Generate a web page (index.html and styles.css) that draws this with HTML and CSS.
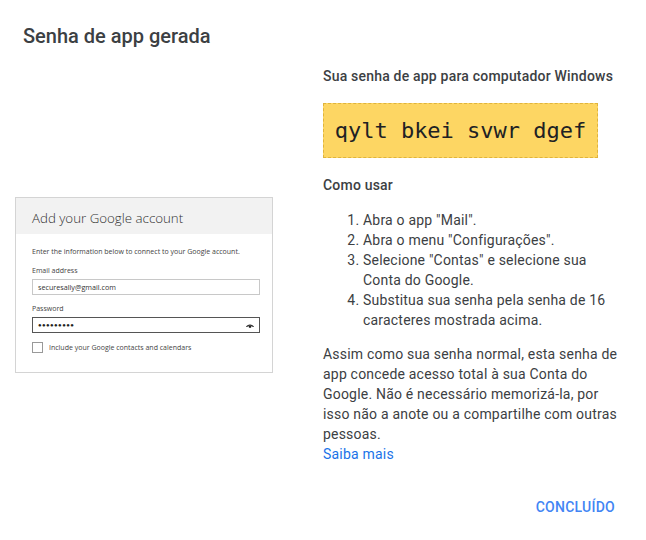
FILE: index.html
```html
<!DOCTYPE html>
<html lang="pt-BR">
<head>
<meta charset="utf-8">
<title>Senha de app gerada</title>
<link rel="stylesheet" href="styles.css">
</head>
<body>
<div class="dialog">
  <h1 class="title">Senha de app gerada</h1>
  <div class="content">
    <div class="left">
      <div class="card">
        <div class="card-head">Add your Google account</div>
        <div class="card-body">
          <p class="card-intro">Enter the information below to connect to your Google account.</p>
          <div class="field-label">Email address</div>
          <div class="input">securesally@gmail.com</div>
          <div class="field-label">Password</div>
          <div class="input input-active">
            <span class="dots">●●●●●●●●●</span>
            <svg class="eye" width="8" height="6" viewBox="0 0 8 6"><path d="M0 5 C1 1.5 7 1.5 8 5 L6.6 5 C5.8 3 2.2 3 1.4 5 Z" fill="#222"/><circle cx="4" cy="4.6" r="1.4" fill="#222"/></svg>
          </div>
          <label class="check"><span class="box"></span>Include your Google contacts and calendars</label>
        </div>
      </div>
    </div>
    <div class="right">
      <h2 class="sub">Sua senha de app para computador Windows</h2>
      <div class="pw">qylt bkei svwr dgef</div>
      <h2 class="sub how">Como usar</h2>
      <ol class="steps">
        <li>Abra o app "Mail".</li>
        <li>Abra o menu "Configurações".</li>
        <li>Selecione "Contas" e selecione sua Conta do Google.</li>
        <li>Substitua sua senha pela senha de 16 caracteres mostrada acima.</li>
      </ol>
      <p class="note">Assim como sua senha normal, esta senha de app concede acesso total à sua Conta do Google. Não é necessário memorizá-la, por isso não a anote ou a compartilhe com outras pessoas.<br><a class="link" href="#">Saiba mais</a></p>
      <div class="actions"><button class="done">Concluído</button></div>
    </div>
  </div>
</div>
</body>
</html>
```
FILE: styles.css
```css
* { box-sizing: border-box; }
html, body { margin: 0; padding: 0; background: #fff; }
body { font-family: Roboto, "Noto Sans", sans-serif; color: #3c4043; }

.dialog { width: 646px; height: 540px; }

.title {
  margin: 0;
  padding: 24px 0 0 23px;
  font-size: 20px;
  line-height: 24px;
  font-weight: 500;
  color: #3c4043;
}

.content { display: flex; padding-top: 16px; }

.left { width: 323px; flex: none; padding-left: 15px; padding-top: 133px; }

.card {
  width: 258px;
  height: 176px;
  border: 1px solid #d4d4d4;
  background: #fff;
  font-family: "Open Sans", "Noto Sans", sans-serif;
  color: #444;
}
.card-head {
  background: #f2f2f2;
  height: 36px;
  padding: 11px 0 0 16px;
  font-size: 13.3px;
  line-height: 18px;
  font-weight: 300;
  color: #333;
}
.card-body { padding: 0 12px 0 16px; }
.card-intro { margin: 13px 0 0; font-size: 7px; line-height: 10px; }
.field-label { font-size: 7px; line-height: 10px; margin-top: 9px; }
.field-label + .input { margin-top: 3px; }
.input {
  height: 16px;
  border: 1px solid #c8c8c8;
  font-size: 7.2px;
  line-height: 14px;
  padding: 0 5px;
  color: #333;
  display: flex;
  align-items: center;
}
.input + .field-label { margin-top: 9px; }
.input-active { border: 1px solid #555; justify-content: space-between; }
.dots { font-size: 6px; letter-spacing: 0.4px; color: #222; }
.eye { display: block; }
.check { display: flex; align-items: center; margin-top: 9px; font-size: 7px; line-height: 10px; }
.box { width: 11px; height: 11px; border: 1px solid #999; margin-right: 6px; background: #fff; }

.right { width: 300px; flex: none; }
.sub {
  margin: 2px 0 0;
  font-size: 14px;
  line-height: 20px;
  font-weight: 500;
  letter-spacing: 0.2px;
  color: #3c4043;
}
.pw {
  margin-top: 17px;
  width: 275px;
  height: 55px;
  background: #fdd663;
  border: 1px dashed #e0b43c;
  font-family: "DejaVu Sans Mono", "Liberation Mono", monospace;
  font-size: 22px;
  line-height: 53px;
  text-align: center;
  color: #202124;
}
.how { margin-top: 17px; }
.steps {
  margin: 15px 0 0;
  padding-left: 40px;
  font-size: 14px;
  letter-spacing: 0.2px;
  line-height: 20px;
}
.note {
  margin: 14px 0 0;
  font-size: 14px;
  letter-spacing: 0.2px;
  line-height: 20px;
}
.link { color: #1a73e8; text-decoration: none; }
.actions { display: flex; justify-content: flex-end; margin-top: 25px; }
.done {
  font-family: Roboto, sans-serif;
  font-size: 14px;
  font-weight: 500;
  letter-spacing: 0.25px;
  text-transform: uppercase;
  color: #4285f4;
  background: none;
  border: 0;
  padding: 9px 8px;
  line-height: 18px;
}
```
